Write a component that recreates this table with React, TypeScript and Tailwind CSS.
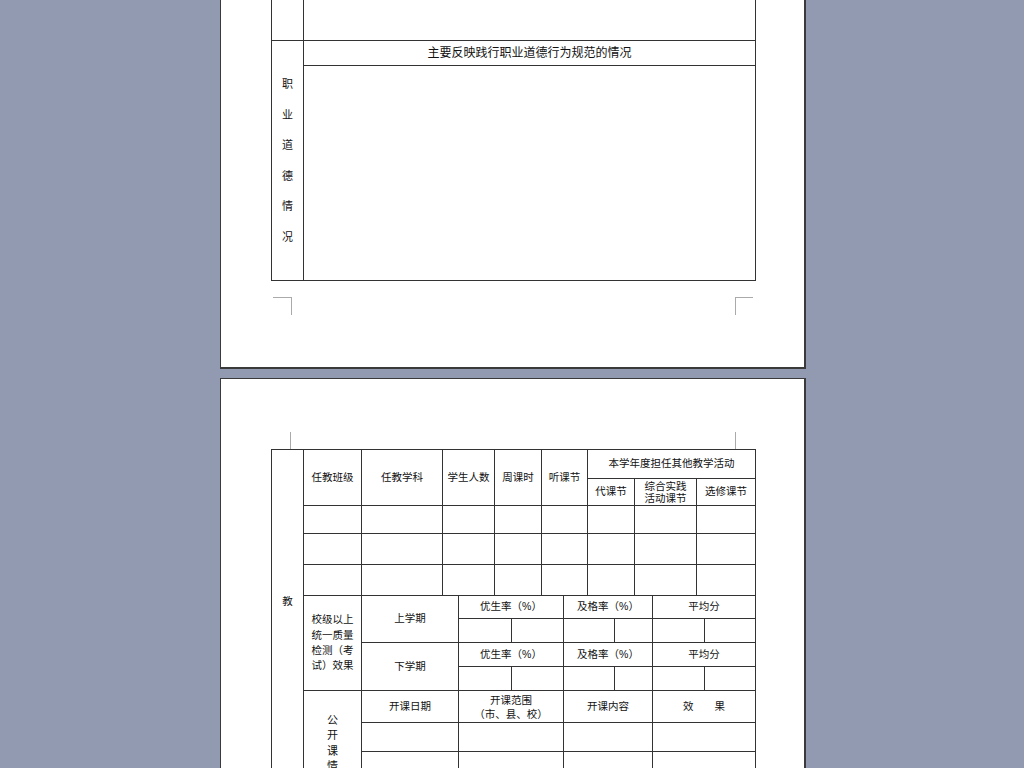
const line = "border-[#333]";

const VCell = ({ w, h, children, className = "" }: { w: string; h?: string; children?: React.ReactNode; className?: string }) => (
  <div className={`${w} ${h ?? "h-full"} shrink-0 border-r border-b border-[#333] flex items-center justify-center text-center ${className}`}>
    {children}
  </div>
);

const PageOne = () => {
  const chars = ["职", "业", "道", "德", "情", "况"];
  return (
    <div className="ml-[220px] w-[586px] h-[369px] bg-white border-l border-r-2 border-b-2 border-[#3a3a3a]">
      {/* table continued from previous page */}
      <div className={`ml-[50px] w-[485px] border-l border-r border-b ${line} flex flex-col`}>
        <div className={`h-[41px] flex border-b ${line}`}>
          <div className={`w-[32px] border-r ${line}`} />
          <div className="flex-1" />
        </div>
        <div className="h-[239px] flex">
          <div className={`w-[32px] border-r ${line} flex flex-col items-center pt-[28px] text-[11px] leading-[30.6px]`}>
            {chars.map((c) => (
              <span key={c}>{c}</span>
            ))}
          </div>
          <div className="flex-1 flex flex-col">
            <div className={`h-[25px] border-b ${line} flex items-center justify-center text-[12px]`}>
              主要反映践行职业道德行为规范的情况
            </div>
            <div className="flex-1" />
          </div>
        </div>
      </div>

      {/* crop marks */}
      <div className="mt-[16px] flex h-[18px]">
        <div className="ml-[52px] w-[19px] h-[18px] border-t border-r border-[#aaa]" />
        <div className="ml-[443px] w-[18px] h-[18px] border-t border-l border-[#aaa]" />
      </div>
    </div>
  );
};

const PageTwo = () => {
  const dataCols = ["w-[58px]", "w-[81px]", "w-[52px]", "w-[47px]", "w-[46px]", "w-[47px]", "w-[62px]", "w-[59px]"];
  const dataRows = ["h-[28px]", "h-[31px]", "h-[31px]"];
  const subCols = ["w-[53px]", "w-[52px]", "w-[51px]", "w-[38px]", "w-[52px]", "w-[51px]"];
  const openCols = ["w-[97px]", "w-[105px]", "w-[89px]", "w-[103px]"];

  const Semester = ({ label, h, h1, h2 }: { label: string; h: string; h1: string; h2: string }) => (
    <div className={`${h} flex`}>
      <VCell w="w-[97px]">{label}</VCell>
      <div className="w-[297px] flex flex-col">
        <div className={`${h1} flex`}>
          <VCell w="w-[105px]">优生率（%）</VCell>
          <VCell w="w-[89px]">及格率（%）</VCell>
          <VCell w="w-[103px]">平均分</VCell>
        </div>
        <div className={`${h2} flex`}>
          {subCols.map((w, i) => (
            <VCell key={i} w={w} />
          ))}
        </div>
      </div>
    </div>
  );

  return (
    <div className="mt-[9px] ml-[220px] w-[586px] h-[600px] bg-white border-l border-t border-r-2 border-[#3a3a3a] pt-[53px]">
      {/* crop marks */}
      <div className="flex h-[17px]">
        <div className="ml-[51px] w-[19px] h-[17px] border-r border-[#aaa]" />
        <div className="ml-[444px] w-[18px] h-[17px] border-l border-[#aaa]" />
      </div>

      <div className={`ml-[50px] w-[485px] border-l border-t ${line} flex text-[10.5px] text-[#111]`}>
        <div className={`w-[32px] shrink-0 border-r ${line} flex flex-col items-center pt-[144px]`}>
          <span>教</span>
        </div>

        <div className="w-[452px] flex flex-col">
          {/* header */}
          <div className="h-[56px] flex">
            <VCell w="w-[58px]">任教班级</VCell>
            <VCell w="w-[81px]">任教学科</VCell>
            <VCell w="w-[52px]">学生人数</VCell>
            <VCell w="w-[47px]">周课时</VCell>
            <VCell w="w-[46px]">听课节</VCell>
            <div className="w-[168px] flex flex-col">
              <VCell w="w-full" h="h-[29px]">本学年度担任其他教学活动</VCell>
              <div className="h-[27px] flex">
                <VCell w="w-[47px]">代课节</VCell>
                <VCell w="w-[62px]" className="leading-[12px]">
                  综合实践
                  <br />
                  活动课节
                </VCell>
                <VCell w="w-[59px]">选修课节</VCell>
              </div>
            </div>
          </div>

          {dataRows.map((h, r) => (
            <div key={r} className={`${h} flex`}>
              {dataCols.map((w, i) => (
                <VCell key={i} w={w} />
              ))}
            </div>
          ))}

          {/* exam results */}
          <div className="h-[95px] flex">
            <VCell w="w-[58px]" className="flex-col leading-[15.3px]">
              <span>校级以上</span>
              <span>统一质量</span>
              <span>检测（考</span>
              <span>试）效果</span>
            </VCell>
            <div className="w-[394px] flex flex-col">
              <Semester label="上学期" h="h-[47px]" h1="h-[23px]" h2="h-[24px]" />
              <Semester label="下学期" h="h-[48px]" h1="h-[24px]" h2="h-[24px]" />
            </div>
          </div>

          {/* open classes */}
          <div className="h-[210px] flex">
            <div className={`w-[58px] shrink-0 border-r border-b ${line} flex flex-col items-center pt-[22px] leading-[15.3px] text-[11px]`}>
              <span>公</span>
              <span>开</span>
              <span>课</span>
              <span>情</span>
              <span>况</span>
            </div>
            <div className="w-[394px] flex flex-col">
              <div className="h-[32px] flex">
                <VCell w="w-[97px]">开课日期</VCell>
                <VCell w="w-[105px]" className="leading-[14px]">
                  开课范围
                  <br />
                  （市、县、校）
                </VCell>
                <VCell w="w-[89px]">开课内容</VCell>
                <VCell w="w-[103px]">效　　果</VCell>
              </div>
              {[0, 1, 2, 3, 4, 5].map((r) => (
                <div key={r} className="h-[29px] flex">
                  {openCols.map((w, i) => (
                    <VCell key={i} w={w} />
                  ))}
                </div>
              ))}
            </div>
          </div>
        </div>
      </div>
    </div>
  );
};

const App = () => {
  return (
    <div className="w-[1024px] h-[768px] overflow-hidden bg-[#929ab2] text-[#111] font-['Liberation_Sans','Noto_Sans_CJK_SC',sans-serif]">
      <PageOne />
      <PageTwo />
    </div>
  );
};

export default App;
